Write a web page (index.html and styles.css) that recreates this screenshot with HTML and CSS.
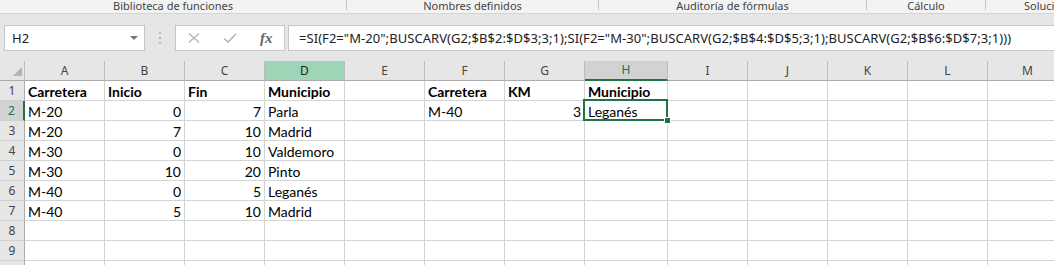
FILE: index.html
```html
<!DOCTYPE html>
<html lang="es">
<head>
    <meta charset="UTF-8">
    <title>Libro1 - Excel</title>
    <link rel="stylesheet" href="styles.css">
</head>
<body>
    <div class="ribbon-groups">
        <div class="group g-lib">Biblioteca de funciones</div>
        <div class="group g-names">Nombres definidos</div>
        <div class="group g-audit">Auditoría de fórmulas</div>
        <div class="group g-calc">Cálculo</div>
        <div class="group g-sol">Soluciones</div>
    </div>

    <div class="formula-bar">
        <div class="name-box">
            <span>H2</span>
            <span class="caret"></span>
        </div>
        <div class="grip"><i></i><i></i><i></i></div>
        <div class="fx-buttons">
            <svg class="ico-cancel" width="12" height="10" viewBox="0 0 12 10">
                <path d="M1 0.5 L11 9.5 M11 0.5 L1 9.5" stroke="#b3b3b3" stroke-width="1.3" fill="none"/>
            </svg>
            <svg class="ico-enter" width="14" height="10" viewBox="0 0 14 10">
                <path d="M1 5.5 L5 9 L13 1" stroke="#b3b3b3" stroke-width="1.6" fill="none"/>
            </svg>
            <span class="fx">fx</span>
        </div>
        <div class="formula-input">=SI(F2="M-20";BUSCARV(G2;$B$2:$D$3;3;1);SI(F2="M-30";BUSCARV(G2;$B$4:$D$5;3;1);BUSCARV(G2;$B$6:$D$7;3;1)))</div>
    </div>

    <div class="sheet-wrap">
        <table class="sheet">
            <thead>
                <tr>
                    <th class="rh corner">
                        <svg width="24" height="19" viewBox="0 0 24 19"><polygon points="22,6 22,15 13,15" fill="#b4b4b4"/></svg>
                    </th>
                    <th>A</th><th>B</th><th>C</th><th class="hl-col">D</th><th>E</th><th>F</th><th>G</th>
                    <th class="wide sel-col">H</th>
                    <th>I</th><th>J</th><th>K</th><th>L</th><th>M</th>
                </tr>
            </thead>
            <tbody>
                <tr class="titles">
                    <th>1</th>
                    <td>Carretera</td><td>Inicio</td><td>Fin</td><td>Municipio</td><td></td>
                    <td>Carretera</td><td>KM</td><td>Municipio</td>
                    <td></td><td></td><td></td><td></td><td></td>
                </tr>
                <tr>
                    <th class="sel-row">2</th>
                    <td>M-20</td><td class="num">0</td><td class="num">7</td><td>Parla</td><td></td>
                    <td>M-40</td><td class="num">3</td><td class="active">Leganés</td>
                    <td></td><td></td><td></td><td></td><td></td>
                </tr>
                <tr>
                    <th>3</th>
                    <td>M-20</td><td class="num">7</td><td class="num">10</td><td>Madrid</td><td></td>
                    <td></td><td></td><td></td><td></td><td></td><td></td><td></td><td></td>
                </tr>
                <tr>
                    <th>4</th>
                    <td>M-30</td><td class="num">0</td><td class="num">10</td><td>Valdemoro</td><td></td>
                    <td></td><td></td><td></td><td></td><td></td><td></td><td></td><td></td>
                </tr>
                <tr>
                    <th>5</th>
                    <td>M-30</td><td class="num">10</td><td class="num">20</td><td>Pinto</td><td></td>
                    <td></td><td></td><td></td><td></td><td></td><td></td><td></td><td></td>
                </tr>
                <tr>
                    <th>6</th>
                    <td>M-40</td><td class="num">0</td><td class="num">5</td><td>Leganés</td><td></td>
                    <td></td><td></td><td></td><td></td><td></td><td></td><td></td><td></td>
                </tr>
                <tr>
                    <th>7</th>
                    <td>M-40</td><td class="num">5</td><td class="num">10</td><td>Madrid</td><td></td>
                    <td></td><td></td><td></td><td></td><td></td><td></td><td></td><td></td>
                </tr>
                <tr>
                    <th>8</th>
                    <td></td><td></td><td></td><td></td><td></td><td></td><td></td>
                    <td></td><td></td><td></td><td></td><td></td><td></td>
                </tr>
                <tr>
                    <th>9</th>
                    <td></td><td></td><td></td><td></td><td></td><td></td><td></td>
                    <td></td><td></td><td></td><td></td><td></td><td></td>
                </tr>
                <tr>
                    <th></th>
                    <td></td><td></td><td></td><td></td><td></td><td></td><td></td>
                    <td></td><td></td><td></td><td></td><td></td><td></td>
                </tr>
            </tbody>
        </table>
    </div>
</body>
</html>
```

FILE: styles.css
```css
body {
    margin: 0;
    background: #fff;
    font-family: "Noto Sans", sans-serif;
    overflow: hidden;
}

/* ribbon group captions */
.ribbon-groups {
    display: flex;
    height: 13px;
    background: #f3f3f3;
    border-bottom: 1px solid #d5d5d5;
    font-size: 11px;
    line-height: 11px;
    color: #444;
    white-space: nowrap;
}
.group {
    flex: none;
    height: 10px;
    text-align: center;
    border-right: 1px solid #c6c6c6;
}
.g-lib { width: 346px; }
.g-names { width: 251px; }
.g-audit { width: 267px; }
.g-calc { width: 118px; }
.g-sol {
    flex: 1;
    border-right: none;
    text-align: left;
    padding-left: 38px;
}

/* formula bar */
.formula-bar {
    display: flex;
    height: 26px;
    padding: 11px 0 10px;
    background: #e6e6e6;
}
.name-box {
    box-sizing: border-box;
    width: 141px;
    margin-left: 4px;
    padding: 0 6px 0 7px;
    display: flex;
    align-items: center;
    justify-content: space-between;
    background: #fff;
    border: 1px solid #c6c6c6;
    font-size: 13px;
    color: #222;
}
.caret {
    width: 0;
    height: 0;
    border-left: 4px solid transparent;
    border-right: 4px solid transparent;
    border-top: 4px solid #777;
}
.grip {
    width: 30px;
    display: flex;
    flex-direction: column;
    align-items: center;
    justify-content: center;
    gap: 3px;
}
.grip i {
    width: 2px;
    height: 2px;
    background: #b9b9b9;
}
.fx-buttons {
    box-sizing: border-box;
    width: 110px;
    display: flex;
    align-items: center;
    padding-left: 12px;
    background: #fff;
    border: 1px solid #c6c6c6;
}
.ico-enter { margin-left: 23px; }
.fx {
    margin-left: 23px;
    font-family: "Liberation Serif", serif;
    font-style: italic;
    font-weight: bold;
    font-size: 15px;
    color: #666;
}
.formula-input {
    flex: 1;
    margin-left: 3px;
    padding-left: 10px;
    background: #fff;
    border: 1px solid #c6c6c6;
    border-right: none;
    font-size: 13px;
    letter-spacing: 0.05px;
    line-height: 24px;
    color: #222;
    white-space: nowrap;
    overflow: hidden;
}

/* grid */
.sheet-wrap {
    width: 1054px;
    overflow: hidden;
}
.sheet {
    border-collapse: separate;
    border-spacing: 0;
    table-layout: fixed;
    width: 1068px;
    font-family: Lato, sans-serif;
    font-size: 14px;
    color: #000;
}
.sheet th,
.sheet td {
    box-sizing: border-box;
    height: 20px;
    padding: 0 3px;
    border-right: 1px solid #d4d4d4;
    border-bottom: 1px solid #d4d4d4;
    line-height: 16px;
    vertical-align: bottom;
    white-space: nowrap;
    overflow: hidden;
}
.sheet th {
    background: #e6e6e6;
    font-family: "Noto Sans", sans-serif;
    font-weight: normal;
    font-size: 12px;
    color: #444;
    text-align: center;
    vertical-align: middle;
    padding: 0;
}
.sheet thead th {
    width: 80px;
    border-right-color: #bcbcbc;
    border-bottom-color: #ababab;
}
.sheet thead th.rh { width: 25px; }
.sheet thead th.wide { width: 83px; }
.sheet tbody th {
    border-right-color: #ababab;
    border-bottom-color: #cfcfcf;
}
.corner svg { display: block; }

.hl-col {
    background: #9fd5b7 !important;
    color: #222 !important;
}
.sel-col {
    background: #d2d2d2 !important;
    color: #217346 !important;
    border-bottom: 2px solid #217346 !important;
}
.sheet tbody th.sel-row {
    background: #d2d2d2;
    color: #217346;
    border-right: 2px solid #217346;
}

.titles td { font-weight: bold; }
.num { text-align: right; }

.active {
    position: relative;
    overflow: visible !important;
}
.active::before {
    content: "";
    position: absolute;
    left: -2px;
    top: -2px;
    right: -1px;
    bottom: -1px;
    border: 2px solid #217346;
}
.active::after {
    content: "";
    position: absolute;
    right: -4px;
    bottom: -4px;
    width: 5px;
    height: 5px;
    background: #217346;
    border: 1px solid #fff;
}
```
